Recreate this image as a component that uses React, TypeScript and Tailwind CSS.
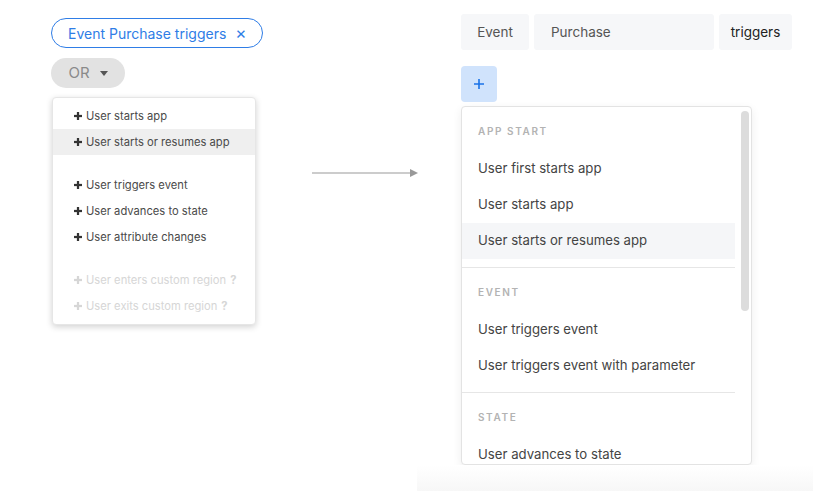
import React from "react";

const leftGroups = [
  [
    { label: "User starts app" },
    { label: "User starts or resumes app", active: true },
  ],
  [
    { label: "User triggers event" },
    { label: "User advances to state" },
    { label: "User attribute changes" },
  ],
  [
    { label: "User enters custom region", disabled: true },
    { label: "User exits custom region", disabled: true },
  ],
];

const rightSections = [
  {
    title: "APP START",
    items: ["User first starts app", "User starts app", "User starts or resumes app"],
    active: 2,
  },
  {
    title: "EVENT",
    items: ["User triggers event", "User triggers event with parameter"],
    active: -1,
  },
  {
    title: "STATE",
    items: ["User advances to state"],
    active: -1,
  },
];

const Plus = ({ className }: { className?: string }) => (
  <svg viewBox="0 0 10 10" className={className} fill="currentColor">
    <rect x="3.6" y="0" width="2.8" height="10" />
    <rect x="0" y="3.6" width="10" height="2.8" />
  </svg>
);

const App = () => (
  <div
    className="w-[813px] h-[491px] bg-white flex overflow-hidden text-[#444]"
    style={{ fontFamily: "Inter, 'Noto Sans', sans-serif" }}
  >
    {/* left: condition editor */}
    <div className="w-[312px] pl-[51px] pt-[18px] flex flex-col items-start">
      <div className="h-[30px] flex items-center pl-[16px] pr-[15px] rounded-full border-[1.5px] border-[#2f7de6] text-[#2f7de6] text-[14px]">
        <span>Event Purchase triggers</span>
        <span className="ml-[9px] text-[17px] leading-none">×</span>
      </div>
      <div className="mt-[10px] h-[30px] w-[74px] flex items-center justify-center gap-[10px] rounded-full bg-[#e2e2e2] text-[#8a8a8a] text-[15px]">
        <span>OR</span>
        <svg viewBox="0 0 8 5" className="w-[8px] h-[5px] text-[#555]" fill="currentColor">
          <path d="M0 0h8L4 5z" />
        </svg>
      </div>
      <div className="mt-[9px] ml-[1px] w-[204px] py-[5px] bg-white rounded-[4px] border border-[#e6e6e6] shadow-[0_2px_6px_rgba(0,0,0,0.18)] flex flex-col gap-[17px] text-[11.2px]">
        {leftGroups.map((group, gi) => (
          <div key={gi} className="flex flex-col">
            {group.map((it) => (
              <div
                key={it.label}
                className={`h-[26px] flex items-center pl-[21px] ${it.active ? "bg-[#efefef]" : ""} ${
                  it.disabled ? "text-[#d6d6d6]" : "text-[#4a4a4a]"
                }`}
              >
                <Plus className={`w-[8px] h-[8px] mr-[4px] ${it.disabled ? "text-[#d6d6d6]" : "text-[#333]"}`} />
                <span>{it.label}</span>
                {it.disabled && <span className="ml-[4px] font-bold">?</span>}
              </div>
            ))}
          </div>
        ))}
      </div>
    </div>

    {/* arrow */}
    <div className="w-[105px] pt-[169px]">
      <svg width="106" height="8" viewBox="0 0 106 8">
        <line x1="0" y1="4" x2="99" y2="4" stroke="#999" strokeWidth="1" />
        <path d="M98 0L106 4L98 8z" fill="#999" />
      </svg>
    </div>

    {/* right: new editor */}
    <div className="flex-1 flex flex-col">
      <div className="pl-[44px] pt-[14px] flex-1 flex flex-col items-start">
        <div className="flex gap-[5px] text-[13.5px]">
          <div className="h-[36px] w-[68px] flex items-center justify-center rounded-[3px] bg-[#f6f7f9] text-[#555]">Event</div>
          <div className="h-[36px] w-[180px] flex items-center pl-[17px] rounded-[3px] bg-[#f6f7f9] text-[#555]">Purchase</div>
          <div className="h-[36px] w-[73px] flex items-center justify-center rounded-[3px] bg-[#f6f7f9] text-[#222]">triggers</div>
        </div>
        <div className="mt-[16px] h-[36px] w-[36px] flex items-center justify-center rounded-[4px] bg-[#d0e3fc] text-[#1a73e8]">
          <svg viewBox="0 0 10 10" className="w-[10px] h-[10px]" stroke="currentColor" strokeWidth="1.6">
            <path d="M5 0v10M0 5h10" />
          </svg>
        </div>
        <div className="mt-[4px] w-[291px] h-[359px] flex rounded-[4px] border border-[#e3e3e3] bg-white shadow-[0_3px_10px_rgba(0,0,0,0.07)] overflow-hidden">
          <div className="w-[273px] flex flex-col">
            {rightSections.map((sec, si) => (
              <div key={sec.title} className={si < rightSections.length - 1 ? "border-b border-[#e6e6e6] pb-[8px]" : ""}>
                <div className="h-[44px] pt-[17px] pl-[16px] text-[10px] leading-[14px] font-semibold tracking-[1.6px] text-[#b3b3b3]">
                  {sec.title}
                </div>
                {sec.items.map((item, ii) => (
                  <div
                    key={item}
                    className={`h-[36px] flex items-center pl-[16px] text-[13.2px] text-[#444] ${ii === sec.active ? "bg-[#f5f6f8]" : ""}`}
                  >
                    {item}
                  </div>
                ))}
              </div>
            ))}
          </div>
          <div className="flex-1 pt-[4px] pl-[6px]">
            <div className="w-[8px] h-[200px] rounded-full bg-[#dcdcdc]" />
          </div>
        </div>
      </div>
      <div className="h-[26px] bg-gradient-to-b from-white to-[#f7f7f7]" />
    </div>
  </div>
);

export default App;
